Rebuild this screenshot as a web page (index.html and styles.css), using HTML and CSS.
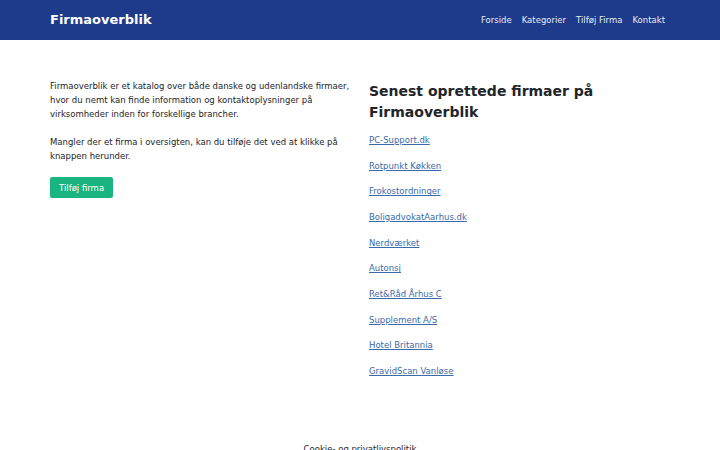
FILE: index.html
```html
<!DOCTYPE html>
<html lang="da">
<head>
<meta charset="utf-8">
<title>Firmaoverblik</title>
<link rel="stylesheet" href="styles.css">
</head>
<body>
<header class="topbar">
  <div class="container topbar-inner">
    <a class="brand" href="#">Firmaoverblik</a>
    <nav class="nav">
      <a href="#">Forside</a>
      <a href="#">Kategorier</a>
      <a href="#">Tilføj Firma</a>
      <a href="#">Kontakt</a>
    </nav>
  </div>
</header>
<main class="container content">
  <section class="col intro">
    <p>Firmaoverblik er et katalog over både danske og udenlandske firmaer, hvor du nemt kan finde information og kontaktoplysninger på virksomheder inden for forskellige brancher.</p>
    <p>Mangler der et firma i oversigten, kan du tilføje det ved at klikke på knappen herunder.</p>
    <a class="btn" href="#">Tilføj firma</a>
  </section>
  <section class="col latest">
    <h2>Senest oprettede firmaer på Firmaoverblik</h2>
    <ul class="list">
      <li><a href="#">PC-Support.dk</a></li>
      <li><a href="#">Rotpunkt Køkken</a></li>
      <li><a href="#">Frokostordninger</a></li>
      <li><a href="#">BoligadvokatAarhus.dk</a></li>
      <li><a href="#">Nerdværket</a></li>
      <li><a href="#">Autonsj</a></li>
      <li><a href="#">Ret&amp;Råd Århus C</a></li>
      <li><a href="#">Supplement A/S</a></li>
      <li><a href="#">Hotel Britannia</a></li>
      <li><a href="#">GravidScan Vanløse</a></li>
    </ul>
  </section>
</main>
<footer class="footer">
  <a href="#">Cookie- og privatlivspolitik</a>
</footer>
</body>
</html>
```
FILE: styles.css
```css
* { box-sizing: border-box; }
html, body {
  margin: 0;
  padding: 0;
  background: #fff;
  color: #212529;
  font-family: "DejaVu Sans", sans-serif;
  font-size: 8.5px;
  line-height: 14px;
}
.container {
  width: 640px;
  margin: 0 auto;
  padding: 0 10px;
}
.topbar {
  background: #1e3a8a;
  height: 40px;
}
.topbar-inner {
  height: 40px;
  display: flex;
  align-items: center;
  justify-content: space-between;
}
.brand {
  color: #fff;
  font-weight: bold;
  font-size: 13px;
  text-decoration: none;
}
.nav {
  display: flex;
}
.nav a {
  color: #e6ebf7;
  text-decoration: none;
  padding: 0 5px;
}
.content {
  display: grid;
  grid-template-columns: 304px 1fr;
  column-gap: 15px;
  padding-top: 39px;
  min-height: 402px;
}
.intro p {
  margin: 0 0 14px;
}
.btn {
  display: inline-block;
  background: #19b47f;
  color: #fff;
  text-decoration: none;
  padding: 4px 9px 3px;
  border-radius: 2px;
  line-height: 14px;
}
.latest h2 {
  margin: 2px 0 10px;
  font-size: 14px;
  line-height: 21px;
  font-weight: bold;
}
.list {
  list-style: none;
  margin: 0;
  padding: 0;
}
.list li {
  height: 25.67px;
  line-height: 14px;
}
.list a {
  color: #3a6aa8;
}
.footer {
  text-align: center;
}
.footer a {
  color: #212529;
  text-decoration: none;
}
```
